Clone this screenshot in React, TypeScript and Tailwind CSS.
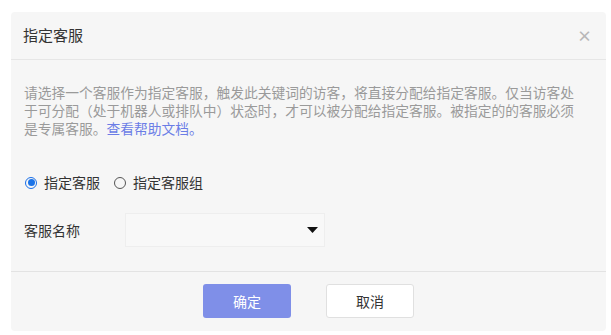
import React from "react";

export default function App() {
  const font = { fontFamily: '"Noto Sans CJK SC", "Noto Sans", sans-serif' };
  return (
    <div className="w-[611px] h-[335px] bg-white pt-[12px] pl-[11px]" style={font}>
      <div className="w-[595px] h-[319px] bg-[#f6f6f6] rounded-[4px] flex flex-col">
        <div className="h-[48px] shrink-0 flex items-center justify-between pl-[12px] pr-[14px] border-b border-[#e6e6e6]">
          <span className="text-[15px] text-[#333]">指定客服</span>
          <span className="text-[15px] font-bold leading-none text-[#b8b8b8]">×</span>
        </div>
        <div className="flex-1 px-[13px] pt-[23px] border-b border-[#e3e3e3]">
          <p className="text-[13.75px] leading-[18px] text-[#9a9a9a] whitespace-nowrap">
            请选择一个客服作为指定客服，触发此关键词的访客，将直接分配给指定客服。仅当访客处
            <br />
            于可分配（处于机器人或排队中）状态时，才可以被分配给指定客服。被指定的的客服必须
            <br />
            是专属客服。<span className="text-[#6b7de6]">查看帮助文档。</span>
          </p>
          <div className="mt-[35px] flex items-center text-[14px] text-[#333]">
            <span className="w-[12px] h-[12px] rounded-full border border-[#1a6fe8] flex items-center justify-center ml-[1px]">
              <span className="w-[7px] h-[7px] rounded-full bg-[#1a73e8]" />
            </span>
            <span className="ml-[7px]">指定客服</span>
            <span className="ml-[14px] w-[12px] h-[12px] rounded-full border border-[#555]" />
            <span className="ml-[7px]">指定客服组</span>
          </div>
          <div className="mt-[20px] flex items-center">
            <span className="w-[101px] text-[14px] text-[#333]">客服名称</span>
            <div className="w-[200px] h-[34px] bg-[#f8f8f8] border border-[#eeeeee] flex items-center justify-end pr-[6px]">
              <svg width="11" height="6" viewBox="0 0 11 6">
                <path d="M0 0 L11 0 L5.5 6 Z" fill="#111" />
              </svg>
            </div>
          </div>
        </div>
        <div className="h-[59px] shrink-0 flex items-center justify-center gap-[35px] pb-[1px]">
          <button className="w-[88px] h-[34px] rounded-[3px] bg-[#7f8fe8] text-white text-[14px]">
            确定
          </button>
          <button className="w-[88px] h-[34px] rounded-[3px] bg-white border border-[#e0e0e0] text-[#333] text-[14px]">
            取消
          </button>
        </div>
      </div>
    </div>
  );
}
